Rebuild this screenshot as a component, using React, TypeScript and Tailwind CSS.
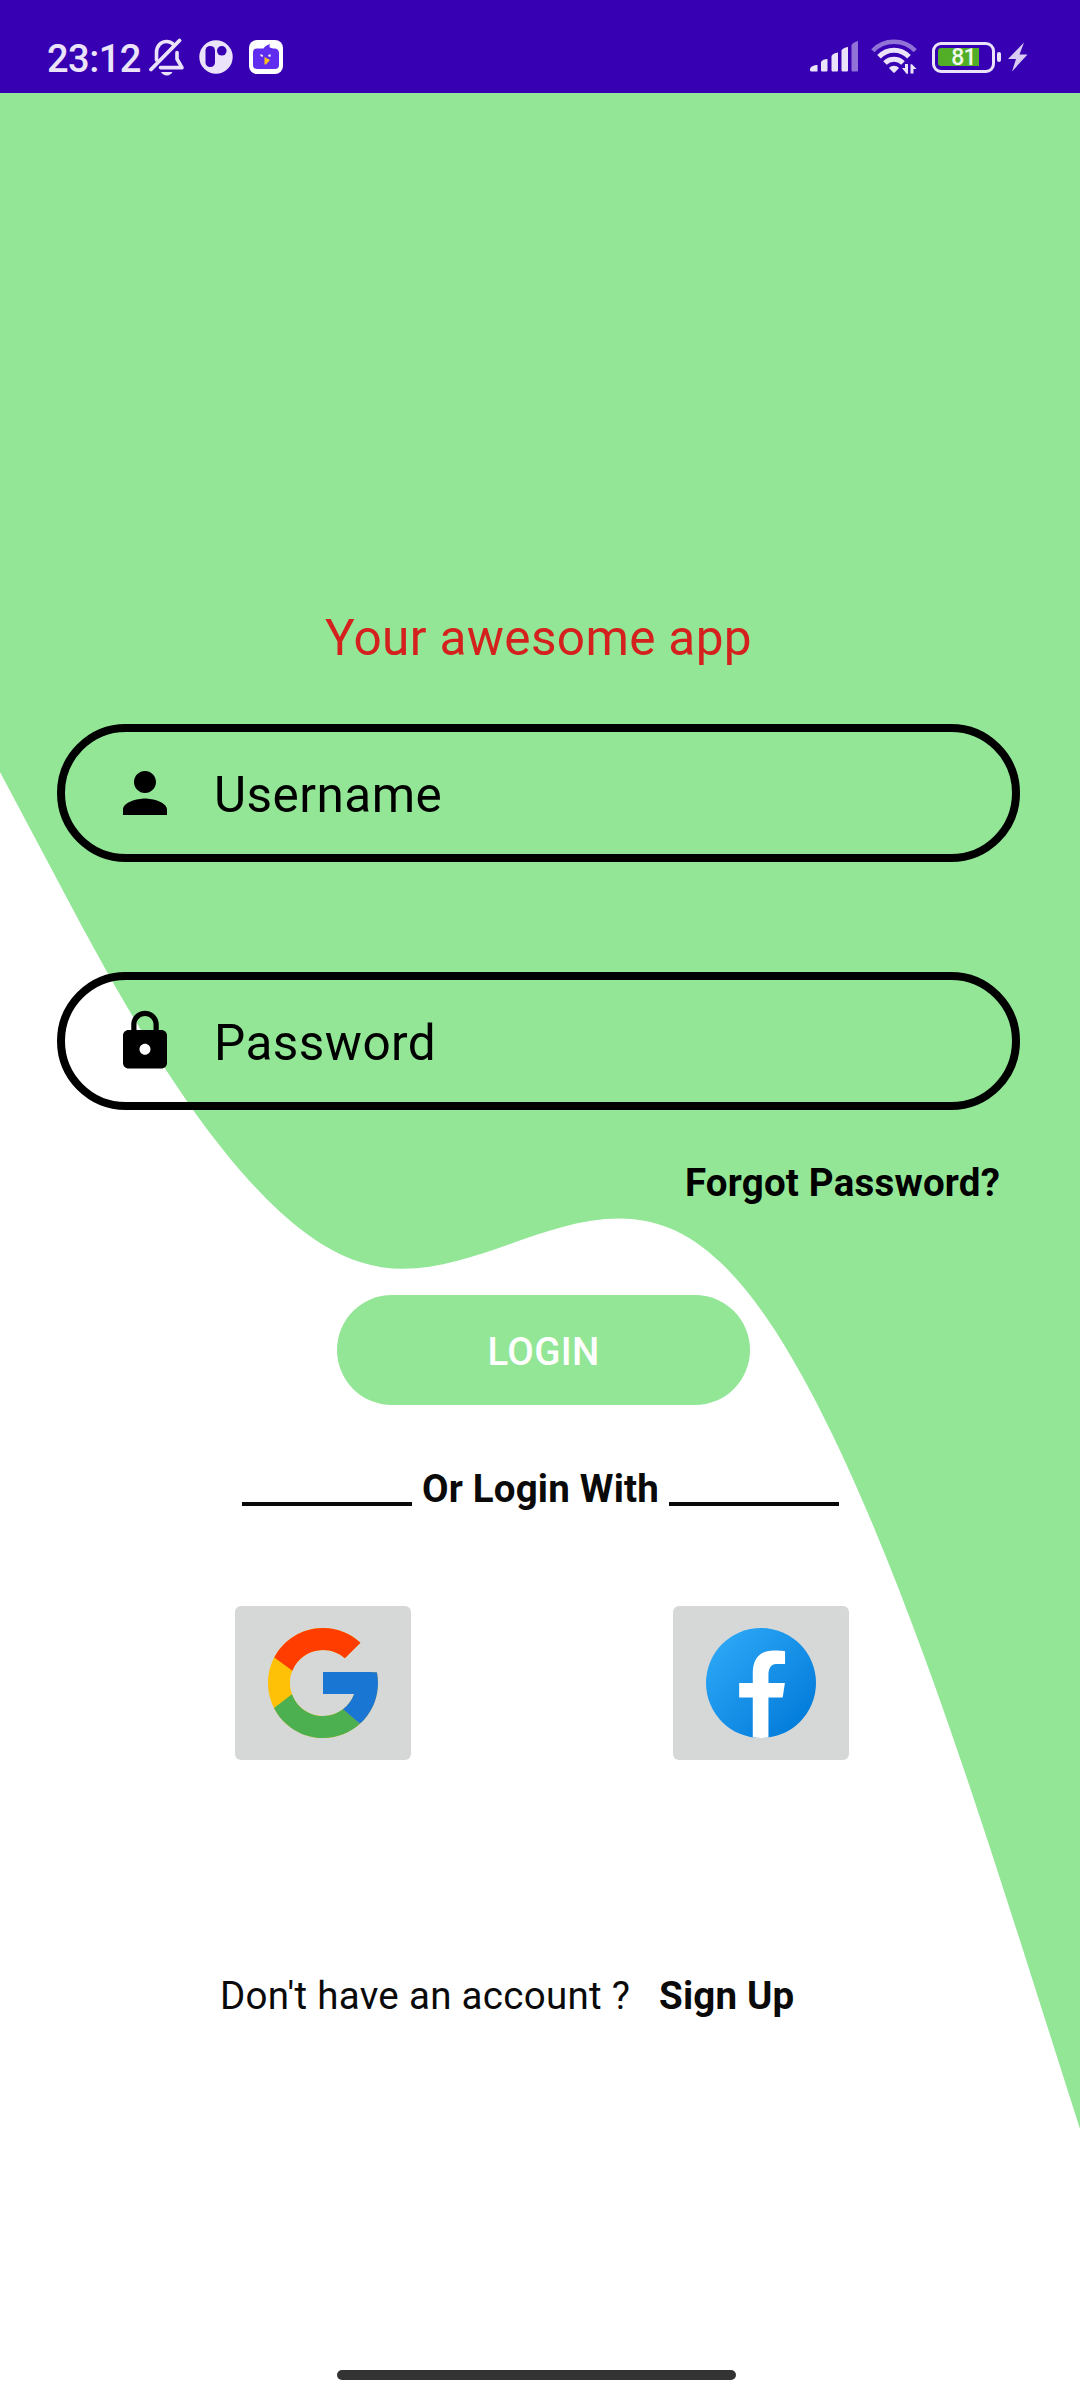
import React from "react";

const INK = "#ebe3fa";

function SilentBell() {
  return (
    <svg className="ml-[9px] h-[40px] w-[36px]" viewBox="0 0 36 40" fill="none" stroke={INK} strokeLinejoin="round" strokeLinecap="round">
      <path d="M7.5 23V15.5C7.5 9 12 4.500 17.500 4.500c3.200 0 5.600 1.200 7.400 3.200M28 15.500V22l5 8.600H11.500" strokeWidth="3.600" />
      <path d="M2 32.500 30.500 3.500" strokeWidth="3.800" />
      <path d="M12 35h11.500c-1.200 2.300-3.200 3.500-5.700 3.500S13.200 37.300 12 35z" fill={INK} stroke="none" />
    </svg>
  );
}

function CircleApp() {
  return (
    <svg className="ml-[13px] h-[36px] w-[36px]" viewBox="0 0 36 36">
      <circle cx="18" cy="18" r="16.700" fill={INK} />
      <rect x="7.500" y="7" width="9.500" height="21" rx="4.500" fill="#3700b3" />
      <circle cx="23.800" cy="11.800" r="4.800" fill="#3700b3" />
    </svg>
  );
}

function BirdApp() {
  return (
    <svg className="ml-[15px] h-[34px] w-[34px]" viewBox="0 0 34 34">
      <rect width="34" height="34" rx="8" fill="#fff" />
      <path d="M8 8.500h6.500c1-2 3-3 6.500-4.500-.6 1.600-.6 2.400-.2 3.500l3.200 1h1.500c2.500 0 4 1.500 4.500 4V25c0 2.500-1.500 4-4 4H8c-2.500 0-4-1.500-4-4V12.500c0-2.500 1.500-4 4-4z" fill="#5f2cf0" />
      <path d="M15.500 17l5.500 3-4 4.500h-1.500z" fill="#fcc419" />
      <path d="M11.500 14l2.500 1.300v1.500l-2.500-.5zM21.500 14l-2.500 1.300.8 1.400h1.700z" fill="#fff" />
    </svg>
  );
}

function Signal() {
  return (
    <svg className="h-[32px] w-[49px]" viewBox="0 0 49 32" fill={INK}>
      <path d="M0 28.500c0-3 4-4.500 7.500-4.500v6.500H1.500c-1 0-1.500-.5-1.500-2z" />
      <path d="M11 21c1-2 3.500-2.700 6.500-3v11c0 1-.5 1.500-1.500 1.500h-3.500c-1 0-1.500-.5-1.500-1.500z" />
      <path d="M21.500 15c1-2 3-3 6.500-3.500V29c0 1-.5 1.500-1.500 1.500H23c-1 0-1.500-.5-1.500-1.500z" />
      <path d="M31.500 9.500c1-2 3-3 6.500-3.500v23c0 1-.5 1.500-1.500 1.500H33c-1 0-1.500-.5-1.500-1.500z" />
      <path d="M41.500 4c1-2 3-3 6.500-4v29c0 1-.5 1.500-1.500 1.500H43c-1 0-1.500-.5-1.500-1.500z" opacity=".5" />
    </svg>
  );
}

function Wifi() {
  return (
    <svg className="ml-[12px] h-[36px] w-[46px]" viewBox="0 0 46 36" fill="none" stroke={INK} strokeWidth="5">
      <path d="M1.800 11.800C13-.2 33-.2 44.200 11.800" opacity=".5" strokeWidth="4.500" />
      <path d="M8 17.800c8.500-8.700 21.500-8.700 30 0" />
      <path d="M14 24c5-5 13-5 18 0" />
      <path d="M18 29c2.800-2.900 7.200-2.900 10 0l-4 4.200c-.7.700-1.300.7-2 0z" fill={INK} stroke="none" />
      <path d="M31 29h3v-4h3v9.800h-1.500zM45.500 30h-3v4.500h-3v-9.300H41z" fill={INK} stroke="none" />
    </svg>
  );
}

function Battery() {
  return (
    <div className="ml-[15px] flex items-center">
      <div className="relative flex h-[31px] w-[63px] rounded-[9px] border-[3px] border-[#ebe3fa] p-[3px]">
        <div className="h-[18px] w-[41px] rounded-l-[3px] bg-[#53ae27]" />
        <span className="absolute inset-x-0 -top-[3px] text-center text-[23px] font-medium leading-[32px] tracking-[-0.8px] text-[#f1f8ee]">81</span>
      </div>
      <div className="ml-[2px] h-[10px] w-[4px] rounded-[2px] bg-[#ebe3fa]" />
      <svg className="ml-[7px] h-[30px] w-[20px]" viewBox="0 0 20 30" fill="#d9ccf4">
        <path d="M16 .5 0 17h8L4 29.500 19.500 12.500H11.500z" />
      </svg>
    </div>
  );
}

function StatusBar() {
  return (
    <header className="relative flex h-[93px] items-start justify-between bg-[#3700b3]">
      <div className="mt-[37px] flex h-[40px] items-center pl-[47px]">
        <span className="w-[93px] whitespace-nowrap pt-[4px] text-[38px] font-medium leading-[44px] tracking-[-0.5px] text-[#ebe3fa]">23:12</span>
        <SilentBell />
        <CircleApp />
        <BirdApp />
      </div>
      <div className="mt-[39px] flex h-[36px] items-center pr-[52px]">
        <Signal />
        <Wifi />
        <Battery />
      </div>
    </header>
  );
}

function Field({ label, icon }: { label: string; icon: string }) {
  return (
    <div className="ml-[57px] flex h-[138px] w-[963px] items-center rounded-full border-[8px] border-black pl-[47px]">
      <svg className="h-[66px] w-[66px]" viewBox="0 0 24 24">
        <path d={icon} />
      </svg>
      <span className="ml-[36px] mt-[4px] text-[49.5px] leading-[60px] tracking-[0.45px]">{label}</span>
    </div>
  );
}

const PERSON = "M12 12c2.210 0 4-1.790 4-4s-1.790-4-4-4-4 1.790-4 4 1.790 4 4 4zm0 2c-2.670 0-8 1.340-8 4v2h16v-2c0-2.660-5.330-4-8-4z";
const LOCK =
  "M18 8h-1V6c0-2.760-2.240-5-5-5S7 3.240 7 6v2H6c-1.100 0-2 .9-2 2v10c0 1.100.9 2 2 2h12c1.100 0 2-.9 2-2V10c0-1.100-.9-2-2-2zm-6 9c-1.100 0-2-.9-2-2s.9-2 2-2 2 .9 2 2-.9 2-2 2zm3.100-9H8.900V6c0-1.710 1.390-3.100 3.100-3.100 1.710 0 3.100 1.390 3.100 3.100v2z";

function GoogleLogo() {
  return (
    <svg className="h-[132px] w-[132px]" viewBox="0 0 48 48">
      <path fill="#FFC107" d="M43.611,20.083H42V20H24v8h11.303c-1.649,4.657-6.08,8-11.303,8c-6.627,0-12-5.373-12-12c0-6.627,5.373-12,12-12c3.059,0,5.842,1.154,7.961,3.039l5.657-5.657C34.046,6.053,29.268,4,24,4C12.955,4,4,12.955,4,24c0,11.045,8.955,20,20,20c11.045,0,20-8.955,20-20C44,22.659,43.862,21.35,43.611,20.083z" />
      <path fill="#FF3D00" d="M6.306,14.691l6.571,4.819C14.655,15.108,18.961,12,24,12c3.059,0,5.842,1.154,7.961,3.039l5.657-5.657C34.046,6.053,29.268,4,24,4C16.318,4,9.656,8.337,6.306,14.691z" />
      <path fill="#4CAF50" d="M24,44c5.166,0,9.86-1.977,13.409-5.192l-6.19-5.238C29.211,35.091,26.715,36,24,36c-5.202,0-9.619-3.317-11.283-7.946l-6.522,5.025C9.505,39.556,16.227,44,24,44z" />
      <path fill="#1976D2" d="M43.611,20.083H42V20H24v8h11.303c-0.792,2.237-2.231,4.166-4.087,5.571c0.001-0.001,0.002-0.001,0.003-0.002l6.19,5.238C36.971,39.205,44,34,44,24C44,22.659,43.862,21.35,43.611,20.083z" />
    </svg>
  );
}

function FacebookLogo() {
  return (
    <svg className="h-[132px] w-[132px]" viewBox="0 0 48 48">
      <defs>
        <linearGradient id="fb" x1="9.993" y1="9.993" x2="40.615" y2="40.615" gradientUnits="userSpaceOnUse">
          <stop offset="0" stopColor="#2aa4f4" />
          <stop offset="1" stopColor="#007ad9" />
        </linearGradient>
      </defs>
      <circle cx="24" cy="24" r="20" fill="url(#fb)" />
      <path fill="#fff" d="M26.707,29.301h5.176l0.813-5.258h-5.989v-2.874c0-2.184,0.714-4.121,2.757-4.121h3.283V12.460c-0.577-0.078-1.797-0.248-4.102-0.248c-4.814,0-7.636,2.542-7.636,8.334v3.498H16.060v5.258h4.948v14.452C21.988,43.900,22.981,44,24,44c0.921,0,1.820-0.084,2.707-0.204V29.301z" />
    </svg>
  );
}

export default function App() {
  return (
    <div className="relative flex h-[2400px] w-[1080px] flex-col overflow-hidden bg-white font-['Roboto',sans-serif] text-black">
      <svg className="absolute left-0 top-0 h-[2400px] w-[1080px]" viewBox="0 0 1080 2400" fill="#92e696">
        <path d="M0 93V772L60 885.1C120 998.2 240 1224.3 360 1262.1C480 1302.1 600 1146.7 720 1262.1C840 1372.8 960 1754.5 1020 1940.5L1080 2129V93z" />
      </svg>
      <StatusBar />
      <main className="relative flex flex-col">
        <h1 className="ml-[325px] mt-[515px] whitespace-nowrap text-[49.5px] leading-[60px] tracking-[0.35px] text-[#d5211e]">Your awesome app</h1>
        <div className="mt-[56px] flex flex-col gap-[110px]">
          <Field label="Username" icon={PERSON} />
          <Field label="Password" icon={LOCK} />
        </div>
        <a className="mr-[80px] mt-[49px] self-end whitespace-nowrap text-[38.5px] font-bold leading-[48px] tracking-[0.2px]">Forgot Password?</a>
        <button className="ml-[337px] mt-[88px] h-[110px] w-[413px] rounded-full bg-[#92e696] pt-[4px] text-[38.5px] font-medium leading-[48px] tracking-[0.3px] text-white">LOGIN</button>
        <div className="ml-[242px] mt-[60px] flex h-[48px] whitespace-nowrap text-[38.5px] font-bold leading-[48px] text-[#0a0a0a]">
          <span className="mt-[37px] h-[4px] w-[170px] bg-[#0a0a0a]" />
          <span className="w-[257px] text-center tracking-[0.2px]">Or Login With</span>
          <span className="mt-[37px] h-[4px] w-[170px] bg-[#0a0a0a]" />
        </div>
        <div className="ml-[235px] mt-[93px] flex gap-[262px]">
          <button className="flex h-[154px] w-[176px] items-center justify-center rounded-[6px] bg-[#d6d8d7]"><GoogleLogo /></button>
          <button className="flex h-[154px] w-[176px] items-center justify-center rounded-[6px] bg-[#d6d8d7]"><FacebookLogo /></button>
        </div>
        <p className="ml-[220px] mt-[212px] flex whitespace-nowrap text-[38.5px] leading-[48px] text-[#0a0a0a]">
          <span className="w-[439px] tracking-[0.3px]">Don't have an account ?</span>
          <a className="font-bold tracking-[0.2px]">Sign Up</a>
        </p>
      </main>
      <div className="relative ml-[337px] mt-[350px] h-[10px] w-[399px] rounded-full bg-[#333333]" />
    </div>
  );
}
